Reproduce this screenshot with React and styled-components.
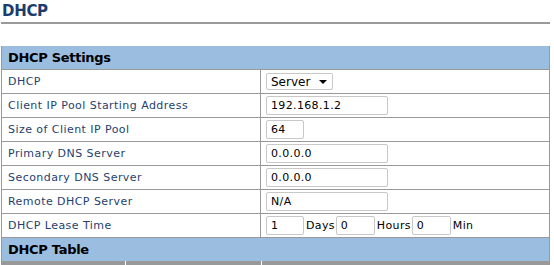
import React from 'react'
import styled, { createGlobalStyle } from 'styled-components'

const GlobalStyle = createGlobalStyle`
  body {
    margin: 0;
    background: #fff;
    font-family: "DejaVu Sans", Verdana, sans-serif;
  }
`

const Page = styled.div`
  width: 549px;
  margin-left: 1px;
`

const Title = styled.h1`
  margin: 0;
  height: 22px;
  padding-left: 1px;
  font-size: 15px;
  font-weight: bold;
  line-height: 22px;
  color: #1b3d6e;
  border-bottom: 2px solid #999;
  letter-spacing: -0.3px;
`

const Table = styled.table`
  width: 549px;
  margin-top: ${p => p.$gap || 0}px;
  border-collapse: collapse;
  font-size: 11px;
`

const Section = styled.th`
  height: 23px;
  padding: 0 0 0 6px;
  text-align: left;
  background: #9bbde0;
  color: #000;
  font-size: 13px;
  font-weight: bold;
  letter-spacing: -0.3px;
  border-left: 1px solid #999;
  border-right: 1px solid #999;
`

const Row = styled.tr`
  border: 1px solid #999;
`

const Label = styled.td`
  width: 252px;
  height: 23px;
  padding: 0 0 0 6px;
  color: #1f3f6f;
  letter-spacing: 0.45px;
  border-right: 1px solid #999;
  white-space: nowrap;
`

const Value = styled.td`
  padding: 0 0 0 5px;
  color: #000;
  white-space: nowrap;
`

const Field = styled.input`
  box-sizing: border-box;
  width: ${p => p.$w || 122}px;
  height: 19px;
  margin: 0;
  padding: 0 4px;
  border: 1px solid #c8c8c8;
  border-radius: 2px;
  font-family: "DejaVu Sans", Verdana, sans-serif;
  font-size: 11px;
  letter-spacing: 0.35px;
  color: #000;
  vertical-align: middle;
  outline: none;
`

const Unit = styled.span`
  vertical-align: middle;
  margin: 0 1px 0 2px;
  letter-spacing: 0.35px;
`

const Select = styled.div`
  box-sizing: border-box;
  display: inline-flex;
  align-items: center;
  justify-content: space-between;
  width: 67px;
  height: 17px;
  padding: 0 5px 0 4px;
  border: 1px solid #c8c8c8;
  border-radius: 2px;
  font-size: 12px;
  vertical-align: middle;
`

const Caret = styled.span`
  width: 0;
  height: 0;
  border-left: 4px solid transparent;
  border-right: 4px solid transparent;
  border-top: 4px solid #000;
`

const ColHead = styled.th`
  height: 10px;
  padding: 0;
  background: #999;
  border-left: 1px solid #fff;
  width: ${p => p.$w}px;
  &:first-child { border-left: 1px solid #999; }
`

const fields = [
  ['Client IP Pool Starting Address', '192.168.1.2', 122],
  ['Size of Client IP Pool', '64', 38],
  ['Primary DNS Server', '0.0.0.0', 122],
  ['Secondary DNS Server', '0.0.0.0', 122],
  ['Remote DHCP Server', 'N/A', 122],
]

export default function App() {
  return (
    <>
      <GlobalStyle />
      <Page>
        <Title>DHCP</Title>
        <Table $gap={22}>
          <tbody>
            <tr><Section colSpan={2}>DHCP Settings</Section></tr>
            <Row>
              <Label>DHCP</Label>
              <Value>
                <Select>Server<Caret /></Select>
              </Value>
            </Row>
            {fields.map(([label, value, w]) => (
              <Row key={label}>
                <Label>{label}</Label>
                <Value><Field $w={w} defaultValue={value} /></Value>
              </Row>
            ))}
            <Row>
              <Label>DHCP Lease Time</Label>
              <Value>
                <Field $w={38} defaultValue="1" /><Unit>Days</Unit>
                <Field $w={39} defaultValue="0" /><Unit>Hours</Unit>
                <Field $w={39} defaultValue="0" /><Unit>Min</Unit>
              </Value>
            </Row>
          </tbody>
        </Table>
        <Table>
          <tbody>
            <tr><Section colSpan={3}>DHCP Table</Section></tr>
            <tr>
              <ColHead $w={123} />
              <ColHead $w={135} />
              <ColHead />
            </tr>
          </tbody>
        </Table>
      </Page>
    </>
  )
}
